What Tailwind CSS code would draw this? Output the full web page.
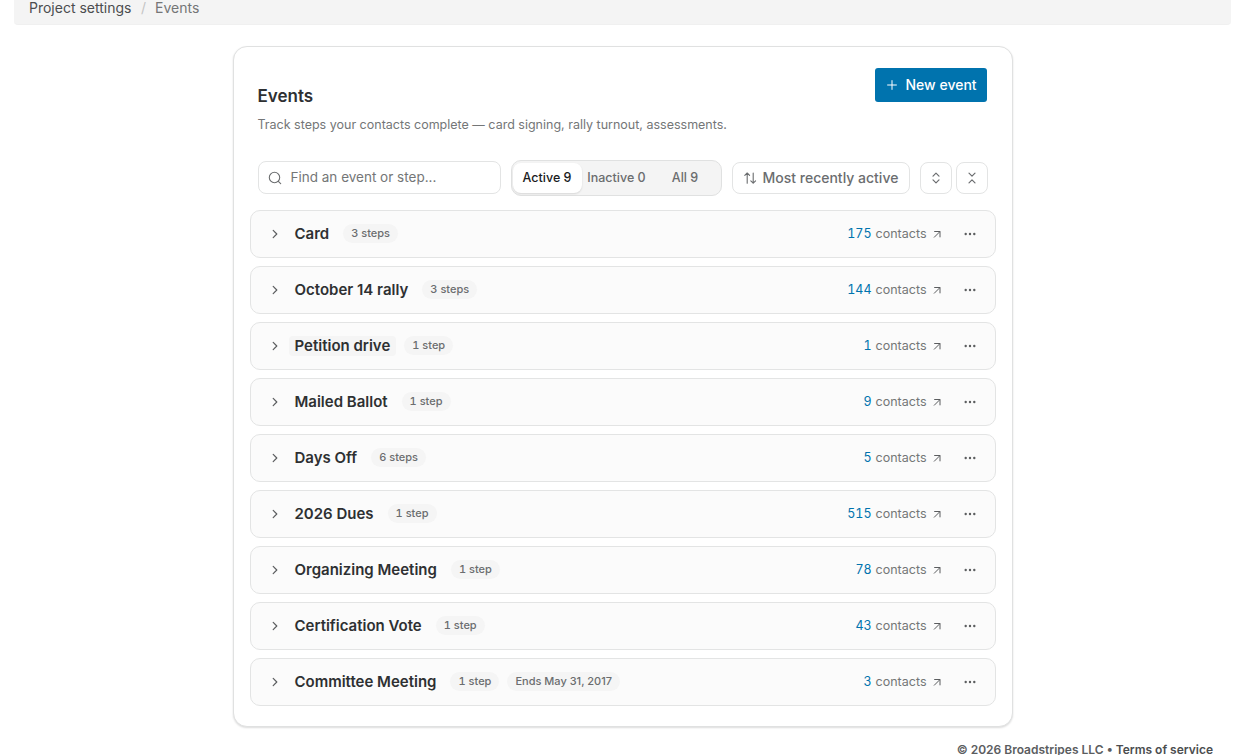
<!DOCTYPE html>
<html lang="en">
<head>
  <meta charset="UTF-8" />
  <meta name="viewport" content="width=device-width, initial-scale=1" />
  <title>Events</title>
  <script src="https://cdn.jsdelivr.net/npm/@tailwindcss/browser@4"></script>
  <style>
    body {
      font-family: Inter, sans-serif;
    }
  </style>
</head>
<body class="bg-white text-[#2e3032] h-screen overflow-hidden flex flex-col">
  <header class="mx-3.5 h-[25px] shrink-0 rounded-b bg-[#f4f4f4] border-b border-[#f0f0f0] px-[15px]">
    <nav class="flex text-sm leading-4">
      <a href="#" class="text-[#4b4d4f]">Project settings</a>
      <span class="ml-[9.5px] mr-[9px] text-[#c4c4c4]">/</span>
      <span class="text-[#747677]">Events</span>
    </nav>
  </header>

  <main class="mt-[21px] ml-[232.5px] w-[780px] h-[681px] shrink-0 bg-white border border-[#e0e1e1] rounded-[14px] shadow-[0_1px_2px_rgba(0,0,0,0.14)] px-4 pt-[21px]">
    <section class="flex justify-between items-start pl-2 pr-[9px]">
      <div>
        <h1 class="mt-4 text-[17px] leading-6 font-semibold">Events</h1>
        <p class="mt-[7px] text-[12.5px] leading-[19px] text-[#747677]">Track steps your contacts complete — card signing, rally turnout, assessments.</p>
      </div>
      <button class="flex items-center h-[34px] w-28 pl-[11px] rounded-[3px] bg-[#0073ae] text-white text-sm font-medium whitespace-nowrap">
        <svg class="w-3 h-3 mr-2" viewBox="0 0 12 12" fill="none" stroke="currentColor" stroke-width="1"><path d="M6 1.2v9.6M1.2 6h9.6" /></svg>
        New event
      </button>
    </section>

    <section class="flex items-center mt-[26px] pl-2 h-9 text-[#6b6d6f]">
      <label class="flex items-center w-[243px] h-[33px] mb-px pl-[9px] border border-[#e3e4e4] rounded-lg">
        <svg class="w-[14px] h-[14px] mt-px mr-[9px] shrink-0" viewBox="0 0 14 14" fill="none" stroke="currentColor" stroke-width="1.1" stroke-linecap="round"><circle cx="6.5" cy="6.5" r="5.2" /><path d="M10.3 10.3l2.4 2.4" /></svg>
        <input type="text" placeholder="Find an event or step..." class="w-full text-[13.5px] outline-none placeholder:text-[#747677]" />
      </label>
      <div class="flex ml-2.5 w-[211px] h-9 px-px py-[2px] border border-[#e0e1e1] rounded-[10px] bg-[#f4f4f4] text-[12.5px] font-medium">
        <button class="w-[69px] rounded-lg bg-white text-[#1b1c1d] shadow-[0_1px_2px_rgba(0,0,0,0.12)]">Active 9</button>
        <button class="w-[70px]">Inactive 0</button>
        <button class="w-[67px]">All 9</button>
      </div>
      <button class="flex items-center ml-2.5 w-[178px] h-8 pl-[10px] border border-[#e3e4e4] rounded-lg text-sm font-medium whitespace-nowrap">
        <svg class="w-[14px] h-[14px] mr-[6px] shrink-0" viewBox="0 0 14 14" fill="none" stroke="currentColor" stroke-width="1.1" stroke-linecap="round" stroke-linejoin="round"><path d="M4.2 12.2V2M1.8 4.4L4.2 2l2.4 2.4M10.2 2v10.2M7.8 9.8l2.4 2.4 2.4-2.4" /></svg>
        Most recently active
      </button>
      <button aria-label="Expand all" class="grid place-items-center ml-2.5 w-8 h-8 border border-[#e3e4e4] rounded-lg">
        <svg class="w-3 h-3" viewBox="0 0 12 12" fill="none" stroke="currentColor" stroke-width="1.2" stroke-linecap="round" stroke-linejoin="round"><path d="M3 4.2l3-3 3 3M3 7.8l3 3 3-3" /></svg>
      </button>
      <button aria-label="Collapse all" class="grid place-items-center ml-1 w-8 h-8 border border-[#e3e4e4] rounded-lg">
        <svg class="w-3 h-3" viewBox="0 0 12 12" fill="none" stroke="currentColor" stroke-width="1.2" stroke-linecap="round" stroke-linejoin="round"><path d="M3 1.2l3 3 3-3M3 10.8l3-3 3 3" /></svg>
      </button>
    </section>

    <ul id="event-list" class="flex flex-col gap-2 mt-[14px]"></ul>
  </main>

  <footer class="mt-[15px] pr-8 text-right text-xs leading-4 font-semibold text-[#5b5d5f]">
    &copy; 2026 Broadstripes LLC &bull; <a href="#" class="text-[#4b4d4f]">Terms of service</a>
  </footer>

  <script>
    const events = [
      { name: 'Card', steps: '3 steps', contacts: 175 },
      { name: 'October 14 rally', steps: '3 steps', contacts: 144 },
      { name: 'Petition drive', steps: '1 step', contacts: 1, highlighted: true },
      { name: 'Mailed Ballot', steps: '1 step', contacts: 9 },
      { name: 'Days Off', steps: '6 steps', contacts: 5 },
      { name: '2026 Dues', steps: '1 step', contacts: 515 },
      { name: 'Organizing Meeting', steps: '1 step', contacts: 78 },
      { name: 'Certification Vote', steps: '1 step', contacts: 43 },
      { name: 'Committee Meeting', steps: '1 step', contacts: 3, ends: 'Ends May 31, 2017' },
    ];

    const pill = (text, extra) => `<span class="ml-2 mb-px h-[19px] px-2 rounded-full bg-[#f5f5f5] text-[11px] leading-[19px] font-medium text-[#6b6d6f] ${extra}">${text}</span>`;

    document.getElementById('event-list').innerHTML = events.map(e => `
      <li class="flex items-center w-[746px] h-12 pl-[18px] pr-[19px] border border-[#e3e4e4] rounded-[10px] bg-[#fbfbfb]">
        <svg class="w-3 h-3 mr-2" viewBox="0 0 12 12" fill="none" stroke="#5b5d5f" stroke-width="1.2" stroke-linecap="round" stroke-linejoin="round"><path d="M4.2 2.4L7.8 6l-3.6 3.6" /></svg>
        <span class="px-1.5 rounded text-[15px] leading-5 font-semibold ${e.highlighted ? 'bg-[#f5f5f5]' : ''}">${e.name}</span>
        ${pill(e.steps, 'tabular-nums')}
        ${e.ends ? pill(e.ends, '') : ''}
        <a href="#" class="flex items-center ml-auto text-[12.5px] text-[#747677]">
          <span class="mr-1 tabular-nums text-[#0073ae]">${e.contacts}</span>contacts
          <svg class="w-2.5 h-2.5 ml-[5px]" viewBox="0 0 10 10" fill="none" stroke="#5b5d5f" stroke-width="1"><path d="M2 8.5l6-6M2.2 2.5H8v5.8" /></svg>
        </a>
        <button aria-label="More actions" class="ml-[22px]">
          <svg class="w-3 h-3" viewBox="0 0 12 12" fill="#5b5d5f"><circle cx="1.7" cy="6" r="1.2" /><circle cx="6" cy="6" r="1.2" /><circle cx="10.3" cy="6" r="1.2" /></svg>
        </button>
      </li>`).join('');
  </script>
</body>
</html>
